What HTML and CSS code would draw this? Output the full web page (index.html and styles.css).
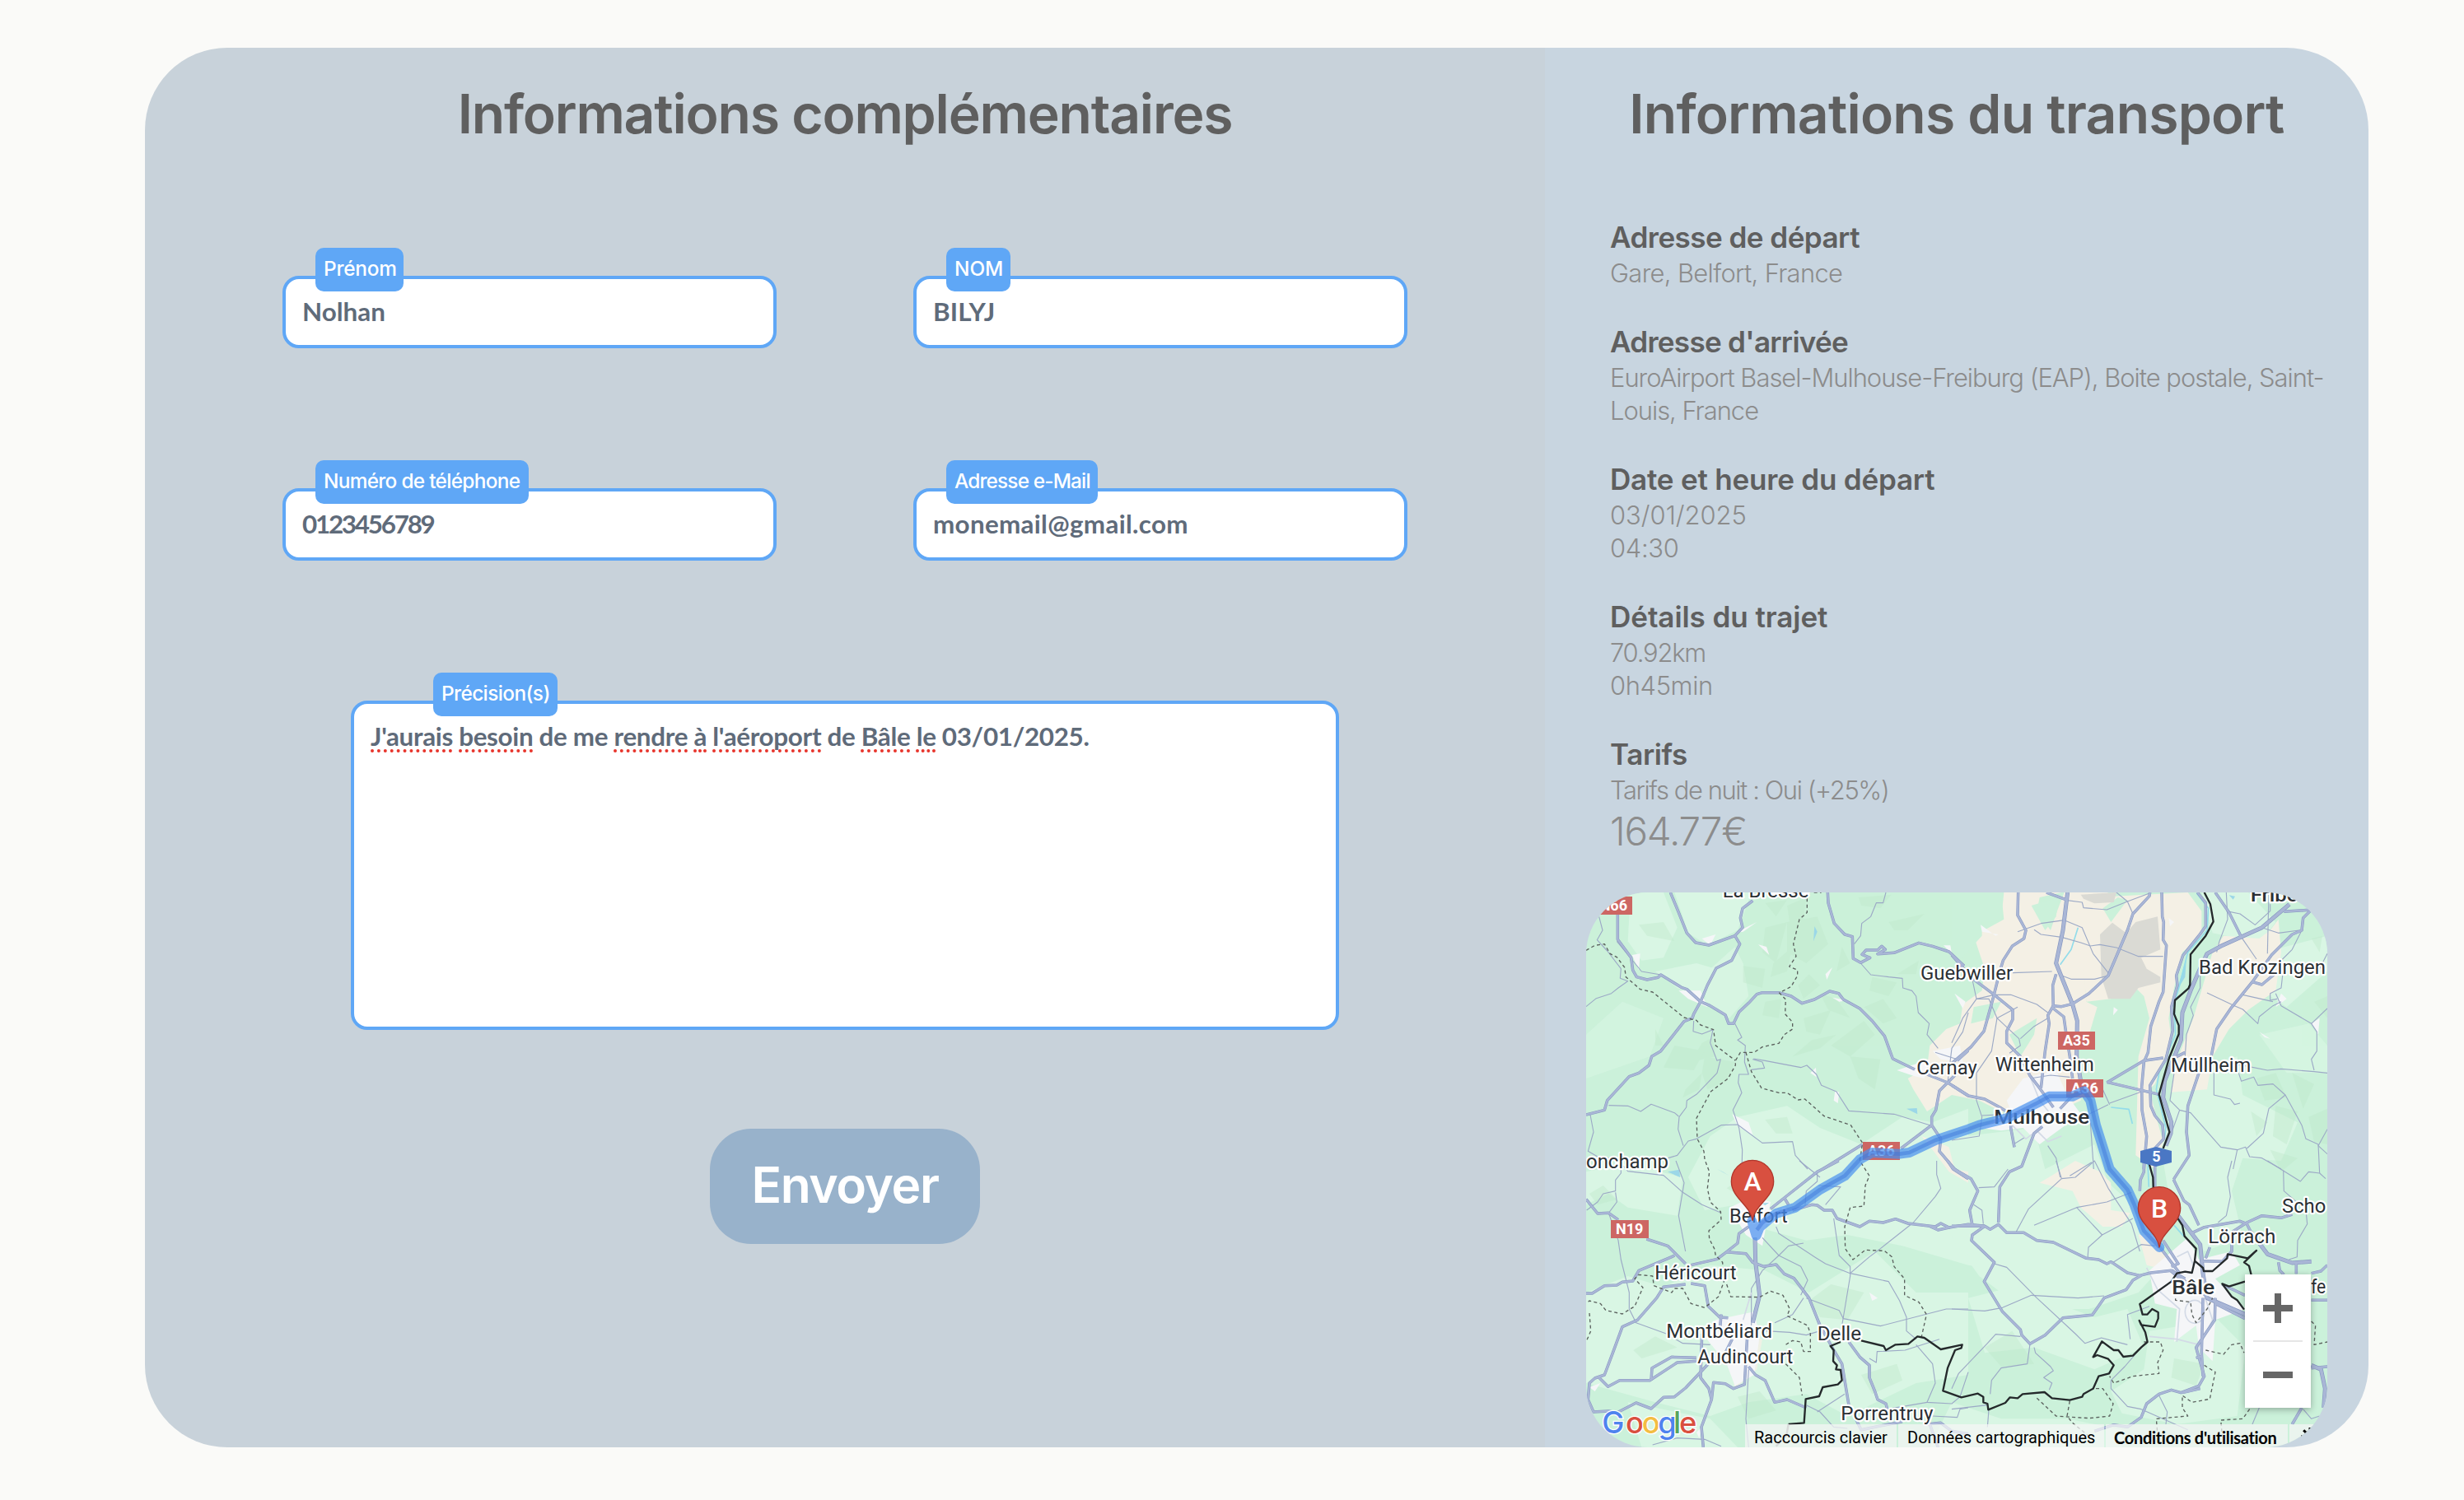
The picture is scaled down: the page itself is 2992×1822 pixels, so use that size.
FILE: index.html
```html
<!DOCTYPE html>
<html lang="fr">
<head>
<meta charset="utf-8">
<title>Réservation de transport</title>
<link rel="stylesheet" href="styles.css">
</head>
<body>
<main class="card">
  <section class="form-panel">
    <h1 class="title title-form">Informations complémentaires</h1>
    <form class="form">
      <div class="fields">
        <div class="field"><label class="tag tag-first" for="prenom">Prénom</label><input class="input input-first" id="prenom" value="Nolhan"></div>
        <div class="field"><label class="tag tag-last" for="nom">NOM</label><input class="input input-last" id="nom" value="BILYJ"></div>
        <div class="field"><label class="tag tag-tel" for="tel">Numéro de téléphone</label><input class="input input-tel" id="tel" value="0123456789"></div>
        <div class="field"><label class="tag tag-mail" for="mail">Adresse e-Mail</label><input class="input input-mail" id="mail" value="monemail@gmail.com"></div>
      </div>
      <div class="notes-field">
        <span class="tag tag-notes">Précision(s)</span>
        <div class="notes" contenteditable="true" spellcheck="false"><u>J'aurais</u> <u>besoin</u> de me <u>rendre</u> <u>à</u> <u>l'aéroport</u> de <u>Bâle</u> <u>le</u> 03/01/2025.</div>
      </div>
      <button class="submit" type="button">Envoyer</button>
    </form>
  </section>

  <section class="trip-panel">
    <h1 class="title title-trip">Informations du transport</h1>
    <div class="info">
      <div class="block"><h2 class="h-from">Adresse de départ</h2><p class="p-from">Gare, Belfort, France</p></div>
      <div class="block"><h2 class="h-to">Adresse d'arrivée</h2><p class="p-to">EuroAirport Basel-Mulhouse-Freiburg (EAP), Boite postale, Saint-<br>Louis, France</p></div>
      <div class="block"><h2 class="h-date">Date et heure du départ</h2><p class="p-date">03/01/2025</p><p class="p-time">04:30</p></div>
      <div class="block"><h2 class="h-ride">Détails du trajet</h2><p class="p-km">70.92km</p><p class="p-min">0h45min</p></div>
      <div class="block"><h2 class="h-price">Tarifs</h2><p class="p-night">Tarifs de nuit : Oui (+25%)</p><p class="price">164.77€</p></div>
    </div>

    <div class="map">
      <svg class="map-canvas" viewBox="48 42 2700 2022">
        <!-- ground cover -->
        <rect x="48" y="42" width="2700" height="2022" fill="#cbf1da"/>
        <g fill="#d9f6e4">
          <path d="M370,42 L650,42 600,180 490,235 420,190Z"/>
          <path d="M210,42 L330,42 380,170 330,280 250,290 200,220Z"/>
          <path d="M300,330 L450,300 520,320 470,430 380,390Z"/>
          <path d="M490,330 L590,240 620,300 640,420 570,500 480,440Z" opacity=".8"/>
          <path d="M48,560 L180,440 330,500 280,640 48,720Z" opacity=".55"/>
          <path d="M600,860 L780,820 900,900 1050,960 1200,860 1310,880 1440,830 1440,1400 1200,1330 1000,1290 850,1310 700,1270 600,1180 480,1200 420,1080 500,930Z"/>
          <path d="M48,1060 L200,1030 400,1080 380,1220 200,1190 130,1140 48,1180Z"/>
          <path d="M48,1500 L200,1440 330,1480 500,1400 700,1420 860,1500 1100,1350 1250,1500 1440,1500 1440,1800 1250,1830 1000,1950 850,1870 640,1900 500,1950 300,1900 48,1830Z"/>
          <path d="M1430,930 L1680,900 1720,1050 1900,960 1950,1100 2060,1200 2150,1400 2060,1500 1880,1560 1640,1560 1480,1440 1380,1300Z"/>
          <path d="M2200,700 L2420,640 2440,780 2640,880 2580,1020 2440,1010 2400,1130 2440,1300 2300,1350 2180,1200 2140,960Z"/>
          <path d="M2290,42 L2460,42 2560,150 2480,260 2380,200 2330,190Z"/>
          <path d="M2480,270 L2748,200 2748,330 2600,460 2540,420Z"/>
          <path d="M1440,1520 L1600,1480 1900,1590 2020,1560 2080,1700 1900,1780 1680,1700 1500,1720Z"/>
          <path d="M2100,1640 L2350,1600 2450,1700 2420,1950 2200,1980 2000,1940 1960,1860 2080,1780Z"/>
          <path d="M1380,1900 L1560,1960 1800,1960 2000,2000 2000,2064 1300,2064Z"/>
          <path d="M1420,1080 L1600,1050 1620,1200 1560,1420 1440,1400Z"/>
          <path d="M2500,560 L2680,520 2748,600 2748,700 2600,700Z" opacity=".7"/>
          <path d="M200,1900 L500,1960 600,2064 250,2064Z"/>
        </g>
        <!-- relief facets -->
        <g fill="#bfe8cb" opacity=".42">
          <path d="M780,90 L850,60 840,140 800,220Z"/><path d="M700,170 L780,150 740,300 690,260Z"/><path d="M730,300 L800,240 780,330 720,350Z"/>
          <path d="M780,150 L890,130 930,230 850,300 780,260Z"/><path d="M620,310 L700,320 690,390 620,370Z"/><path d="M820,380 L860,340 900,380 840,430Z"/>
          <path d="M700,440 L760,430 750,500 690,490Z"/><path d="M840,500 L940,470 900,560 850,550Z"/><path d="M870,580 L960,560 900,610 800,640Z"/>
          <path d="M940,600 L1060,510 1100,560 1010,640Z"/><path d="M1090,350 L1180,370 1150,420 1080,400Z"/><path d="M470,590 L510,570 520,640 430,660Z"/>
          <path d="M370,600 L480,620 440,690 330,680Z"/><path d="M480,640 L590,660 560,730 490,760 470,700Z"/><path d="M410,760 L470,700 460,760 400,790Z"/>
          <path d="M300,540 L330,600 300,600Z"/><path d="M700,870 L780,860 800,920 740,920Z"/><path d="M1010,640 L1120,650 1100,760 1040,720Z"/>
          <path d="M240,160 L330,150 370,220 270,200Z"/><path d="M1040,60 L1160,50 1120,100 1050,90Z"/><path d="M1150,150 L1280,120 1220,180 1170,180Z"/>
          <path d="M1180,340 L1260,290 1250,340Z"/><path d="M700,80 L780,70 740,130Z"/><path d="M900,410 L960,430 1010,500 930,470Z"/>
          <path d="M1060,460 L1130,430 1180,500 1130,520Z"/><path d="M980,240 L1010,300 960,330Z"/><path d="M2490,720 L2560,700 2600,790 2520,800Z"/>
          <path d="M2560,820 L2640,840 2600,960 2550,930Z"/><path d="M2470,840 L2530,880 2490,930Z"/><path d="M2620,700 L2700,740 2660,830Z"/>
          <path d="M2680,860 L2748,830 2748,960 2700,950Z"/><path d="M2540,980 L2640,1010 2580,1060Z"/><path d="M2690,210 L2730,200 2720,260Z"/>
          <path d="M2700,440 L2748,420 2748,500Z"/><path d="M60,1140 L110,1110 160,1160 90,1180Z"/><path d="M860,1530 L940,1470 1060,1500 1000,1600 900,1590Z"/>
          <path d="M220,1710 L300,1660 380,1700 250,1740Z"/><path d="M1050,1800 L1180,1760 1200,1820 1090,1870Z"/><path d="M1500,1700 L1600,1640 1680,1760 1560,1770Z"/>
          <path d="M560,1120 L620,1080 700,1120 630,1160Z"/><path d="M2190,1740 L2300,1760 2270,1840 2180,1810Z"/><path d="M600,1880 L680,1860 740,1930 640,1960Z"/>
        </g>
        <!-- lowland, heath and settlements -->
        <g fill="#f4f0e5">
          <path d="M1560,42 L1780,42 1700,60 1690,110 1740,180 1760,120 1790,42 1950,42 1900,110 1900,200 1860,280 1870,440 1910,460 1880,560 1840,620 1850,720 1850,800 1700,870 1560,840 1480,800 1380,780 1290,840 1240,760 1220,720 1290,680 1300,600 1360,540 1410,520 1420,450 1490,400 1500,320 1460,200 1570,140Z"/>
          <path d="M1900,60 L2240,42 2290,110 2290,200 2220,260 2190,390 2170,500 2180,580 2120,740 2100,760 2130,880 2150,950 2120,1050 2050,1000 2060,640 2100,500 2080,420 2050,390 1960,430 1870,440 1850,200Z"/>
          <path d="M2330,260 L2370,200 2500,210 2540,180 2570,140 2580,260 2560,400 2460,470 2390,540 2330,640 2310,760 2180,770 2190,680 2260,500Z"/>
          <path d="M1700,1100 L1750,1070 1830,1020 1920,1060 1960,1100 1960,1200 2030,1210 2000,1260 1930,1260 1850,1190 1820,1130Z"/>
          <path d="M2060,1290 L2120,1290 2170,1380 2130,1410 2090,1400Z"/>
          <path d="M1270,930 L1370,970 1390,1050 1440,1060 1440,1100 1370,1060 1310,980Z"/>
          <path d="M575,1770 L640,1650 690,1670 670,1780 590,1850Z" opacity=".8"/>
        </g>
        <g fill="#cbf1da">
          <path d="M1670,90 L1770,60 1760,130 1720,180Z"/><path d="M1460,460 L1560,440 1530,500 1450,520Z"/><path d="M1590,560 L1690,500 1680,560 1630,640Z"/>
          <path d="M1380,42 L1570,42 1560,145 1490,150 1490,200 1380,320Z"/><path d="M1930,100 L1985,60 2020,70 1960,150Z"/>
        </g>
        <g fill="#dadad4">
          <path d="M1850,50 L1980,42 1970,78 1900,82 1860,65Z"/>
          <path d="M1920,195 L1965,152 2015,190 2050,150 2130,130 2140,250 2070,280 2090,320 2140,350 2140,370 2060,390 2030,430 1950,430 1925,350Z"/>
        </g>
        <g fill="#f5f6f8">
          <path d="M1640,720 L1760,690 1800,780 1850,850 1740,930 1700,960 1640,900 1560,910 1480,900 1600,850 1580,800Z"/>
          <path d="M1180,690 L1300,650 1280,720 1240,710Z"/><path d="M1310,620 L1410,600 1420,660 1340,650Z"/>
          <path d="M2100,1420 L2240,1300 2280,1380 2400,1350 2430,1400 2340,1450 2450,1560 2340,1600 2330,1750 2280,1700 2270,1620 2190,1680 2200,1560 2120,1540Z"/>
          <path d="M520,1600 L660,1570 680,1660 660,1800 590,1840 560,1760 480,1660Z"/><path d="M570,1190 L660,1150 720,1170 690,1330 630,1290Z"/>
          <path d="M385,400 L465,400 490,460 420,430Z"/><path d="M470,210 L520,195 500,235Z"/><path d="M590,190 L670,150 620,185Z"/>
          <path d="M215,270 L245,265 240,325Z"/><path d="M675,232 L705,240 715,270Z"/><path d="M580,850 L640,880 655,925 600,895Z"/>
          <path d="M920,340 L945,315 925,360Z"/><path d="M945,425 L1000,435 970,440Z"/><path d="M1350,235 L1375,235 1380,265Z"/>
          <path d="M1485,160 L1540,200 1550,195 1490,185Z"/><path d="M1390,410 L1430,440 1420,465Z"/><path d="M2190,150 L2170,135 2175,165Z"/>
          <path d="M2560,460 L2580,410 2600,430Z"/><path d="M2690,520 L2720,500 2715,560Z"/><path d="M865,700 L885,680 887,715Z"/>
          <path d="M955,765 L970,770 965,810 950,800Z"/><path d="M450,2010 L468,1990 460,2030Z"/><path d="M1080,1500 L1110,1520 1090,1530Z"/>
          <path d="M1970,460 L1985,470 1968,490Z"/><path d="M2500,550 L2540,575 2520,570Z"/><path d="M60,1845 L100,1830 80,1860Z"/>
        </g>
        <g fill="#9bd7e8">
          <path d="M880,165 L890,185 876,220Z"/><path d="M1215,830 L1253,828 1255,850Z"/><path d="M345,1060 L388,1052 390,1080Z"/><path d="M525,1050 L570,1075 545,1060Z"/>
          <path d="M690,1175 L715,1172 700,1182Z"/><path d="M2390,52 L2412,56 2405,68Z"/><path d="M2200,400 L2235,280 2230,350Z"/>
        </g>
        <g class="water"><path d="M2272,45 L2315,100 2310,180 2240,260 2210,380 2190,450 2195,560 2135,700 2125,760 2160,900 2155,940"/><path d="M2094,1030 L2098,1115"/><path d="M1840,170 L1815,250 1775,305"/><path d="M1960,825 L2025,832 2038,885"/><path d="M2190,1255 L2225,1295"/></g>

        <!-- minor roads, north-west -->
        <g class="minor">
          <path d="M95,130 L108,180 88,215 125,255 175,320 172,355 200,365 165,390 140,410 85,428 48,458"/><path d="M160,220 L250,330 320,342"/>
          <path d="M440,510 L438,548 470,558 510,542 500,590 525,655 538,650 525,700 450,778 415,800 413,825 387,860 383,905 402,965"/>
          <path d="M130,818 L200,820 247,840 285,814 370,845 385,858"/><path d="M63,852 L75,915 55,985 90,1005 180,1015"/>
          <path d="M590,520 L615,570 600,580 628,600 625,660 640,705 605,705 602,735 615,772 583,835 605,900 617,980 615,1060"/>
          <path d="M330,1015 L380,1000 420,948 450,940 500,912 540,890 600,888 690,955 800,950 810,1000 855,1050"/>
          <path d="M655,650 L690,660 698,682 650,688"/><path d="M658,648 L700,655 830,680 852,672 887,705 905,745 960,768 1005,838 1170,850 1300,890"/>
          <path d="M1140,42 L1130,80 1105,80 1085,130 1052,155 1048,200 1025,230"/>
          <path d="M1048,300 L1085,342 1150,350 1200,355 1202,390 1235,400 1250,420 1258,480 1298,520 1290,560 1330,610"/>
          <path d="M1320,625 L1400,650"/><path d="M1440,480 L1420,550 1380,610 1365,735"/>
        </g>
        <!-- minor roads, north-east -->
        <g class="minor" transform="translate(1380 0)">
          <path d="M240,185 L325,155 410,143 475,170 515,265 570,335"/><path d="M300,178 L325,195 400,205 470,225 505,237 540,232 600,243 680,275 770,275"/>
          <path d="M415,70 L475,78 480,98 565,105 640,75 720,45"/><path d="M222,335 L365,330"/><path d="M400,345 L435,358 520,358 570,345"/><path d="M600,42 L640,75 660,120"/>
          <path d="M75,360 L90,430 155,415 215,415 310,450 350,480"/><path d="M90,430 L40,500 0,590"/><path d="M90,430 L135,430 165,500 240,460"/>
          <path d="M165,500 L245,575 250,600 210,628"/><path d="M350,500 L300,530 250,575"/><path d="M165,500 L145,620 90,700 90,800 110,860 100,930 0,945"/>
          <path d="M285,720 L360,708 430,715"/><path d="M110,855 L200,850"/><path d="M225,960 L265,935"/>
          <path d="M1000,42 L1005,140 975,220 965,260"/><path d="M1000,110 L1050,120 1105,160 1160,110 1160,85"/><path d="M1055,205 L1110,285"/><path d="M1155,42 L1150,265"/>
          <path d="M1130,170 L1190,190 1265,180"/><path d="M1275,180 L1240,250 1190,300"/><path d="M1368,265 L1335,330"/><path d="M1205,345 L1200,390 1160,410 1160,435 1185,430"/>
          <path d="M930,408 L1030,455 1060,468 1115,520 1120,495 1170,455 1200,440"/><path d="M1180,410 L1200,455 1310,520 1330,550 1330,620 1310,650 1320,690"/>
          <path d="M1060,415 L1170,440"/><path d="M1368,465 L1310,520"/><path d="M905,340 L905,390 870,460 880,490 855,560 850,640"/>
          <path d="M955,700 L955,780 1015,795 1030,815 1050,810"/><path d="M1000,690 L1050,670 1150,690 1200,685 1320,695 1368,700"/>
          <path d="M1045,700 L1055,730 1100,715 1115,745 1170,740 1215,780 1275,890 1290,940 1335,960 1340,1065"/>
          <path d="M810,700 L795,800 830,835 870,845 980,970 1040,980 1070,970 1085,1005 1130,1010 1200,1050"/><path d="M1040,980 L1025,1050"/><path d="M1075,975 L1135,920 1155,830 1215,780"/>
          <path d="M1368,905 L1335,965 1368,995"/><path d="M830,835 L800,920"/><path d="M575,810 L700,765"/><path d="M550,760 L575,815"/><path d="M570,815 L500,850"/>
          <path d="M350,965 L380,1010 395,1080"/><path d="M505,880 L517,1050"/><path d="M510,1025 L430,1075"/>
        </g>
        <!-- minor roads, south-west -->
        <g class="minor" transform="translate(0 1020)">
          <path d="M180,15 L200,38 330,53 400,115 470,160 540,190"/><path d="M375,0 L405,80 385,200 410,330"/>
          <path d="M175,15 L175,45 155,70 155,110 110,120 90,150 50,180"/><path d="M155,115 L160,150 130,190 165,290 175,360 205,480 205,540 230,590 340,630 400,665 500,670"/>
          <path d="M690,280 L750,345 830,385 855,435 830,490"/><path d="M740,240 L750,265 880,350 920,375 1010,410 1150,440 1190,510 1215,570 1215,620 1250,650"/>
          <path d="M950,210 L970,345 1010,385 1010,420 980,600"/><path d="M1010,410 L1080,350 1120,320 1240,225 1320,130 1340,100 1325,50 1325,0"/>
          <path d="M850,500 L970,545 985,575 1120,602 1360,540 1440,540"/><path d="M700,620 L790,625 850,635 900,620"/><path d="M735,590 L800,560 840,500"/>
          <path d="M690,400 L650,465 650,600"/><path d="M825,0 L900,60"/><path d="M640,760 L630,940 640,1044"/><path d="M890,40 L890,75 850,110 845,170"/><path d="M895,90 L975,95 920,160"/>
          <path d="M890,915 L990,850"/><path d="M850,890 L900,915 950,970 1000,975"/><path d="M290,1035 L380,1010 480,1015 540,1040"/><path d="M1080,720 L1105,735 1108,695 1210,690 1335,650"/>
          <path d="M1250,670 L1310,740 1320,810 1290,880 1380,885 1410,860 1440,770"/><path d="M1145,905 L1290,880"/><path d="M1310,930 L1400,935 1410,905 1440,900"/><path d="M840,300 L785,310 750,345"/><path d="M750,345 L690,400"/>
        </g>
        <!-- minor roads, south-east -->
        <g class="minor" transform="translate(1380 1020)">
          <path d="M380,0 L400,65 280,175 235,258"/><path d="M400,65 L450,60 520,0 570,100 655,230 685,330"/><path d="M655,115 L565,150 455,170 300,235"/><path d="M455,170 L548,270 660,210"/>
          <path d="M548,270 L498,315 495,355"/><path d="M98,98 L155,95 205,30"/><path d="M80,160 L110,180 115,230"/><path d="M155,375 L200,388 310,500 450,630 485,665 545,645 640,670"/>
          <path d="M0,540 L120,547 185,535 290,490 460,500 555,492"/><path d="M300,680 L305,700 360,750 370,765 335,790 365,810 355,835"/><path d="M285,667 L275,740 180,755 145,800 140,850"/>
          <path d="M250,640 L160,632 130,665 25,775 0,830"/><path d="M135,907 L130,970"/><path d="M0,905 L130,890"/><path d="M1020,0 L1005,60 1015,130 1000,200 970,225"/>
          <path d="M1150,0 L1270,75 1300,40 1340,45 1362,65"/><path d="M1208,35 L1210,110 1290,180 1295,230 1260,290 1258,350 1228,360"/><path d="M720,530 L640,560 650,650"/>
          <path d="M690,680 L630,750 580,800 580,830 640,895 690,905 780,945 860,980"/><path d="M755,855 L785,915 780,960"/><path d="M1120,900 L1095,960"/><path d="M1280,905 L1310,940 1340,930"/><path d="M580,375 L690,305 740,310"/>
        </g>
        <g class="urban">
          <path d="M1600,890 L1650,940 1690,910 1730,950 1780,930"/><path d="M1660,700 L1700,800 1740,850"/><path d="M2200,1370 L2240,1350 2260,1400"/><ellipse cx="2265" cy="1570" rx="35" ry="42"/>
          <path d="M2090,1410 L2130,1490 2210,1560 2200,1680"/><path d="M2100,1660 L2200,1670 2280,1690"/><path d="M650,1500 L620,1600"/><path d="M2300,1510 L2330,1600 2270,1720"/>
        </g>

        <!-- main roads: casing then fill -->
        <defs>
          <g id="roads">
            <path d="M355,42 L383,110 415,190 447,225 495,234 590,200 618,170 610,135 618,100 655,72"/><path d="M590,200 L608,230 578,290 522,318 490,380 465,440"/>
            <path d="M163,123 L163,213 212,280 218,325 232,350 270,360 310,352 320,342 395,388 415,395 465,440 500,455 555,488 567,520 585,520 605,478 640,445 670,413 690,407 750,407 795,420 835,446 880,432 935,402 968,410 985,432 1045,465 1090,510 1135,565 1165,648 1245,687"/>
            <path d="M465,440 L440,485 435,500 405,512 320,620 287,640 277,672 240,700 205,713 125,800 115,835 48,852"/>
            <path d="M928,42 L930,80 952,155 990,195 1018,203 1021,283 1048,298 1082,280 1053,268 1068,252 1110,252 1125,238 1138,250 1110,266 1170,262 1260,226 1310,238 1370,258 1425,310"/>
            <path d="M1440,618 L1400,655 M1400,700 L1335,765 1322,835 1307,860 1307,890 1340,940 1335,985 1390,1050 1440,1085"/><path d="M1290,705 L1365,735 1440,782"/><path d="M1307,890 L1195,975"/><path d="M1055,960 L910,1050"/>
            <g transform="translate(1380 0)">
              <path d="M242,42 L240,125 270,180 263,210 220,238 187,290 175,330 150,430 117,548 70,605 0,665"/><path d="M0,270 L75,355 155,415 222,470 222,505 200,548 200,590 250,640 285,710 320,755 370,825"/>
              <path d="M345,42 L415,68"/><path d="M722,42 L720,55 660,120 640,180 570,345 500,410 440,448 400,458 370,455 350,490 355,520 340,620 325,755"/><path d="M380,340 L368,380 370,465 408,495 415,545 430,640 440,720"/>
              <path d="M765,42 L767,130 772,150 770,215 782,235 770,405 755,440 725,530 715,625 700,660 692,750 693,835 710,930 700,1050"/>
              <path d="M895,42 L925,80 925,165 900,200 842,272 818,345 822,380 800,460 805,545 780,650 722,745 725,820 740,855 768,890 772,940 735,980"/>
              <path d="M960,42 L1010,115 1055,205"/><path d="M1310,105 L1210,112"/><path d="M1310,105 L1280,135 1275,180 1240,195 1165,270 1095,368 1020,460 965,540 945,640 900,700 860,820 855,915 865,1000 808,1088"/>
              <path d="M1095,368 L1130,378 1175,340"/><path d="M565,733 L755,778"/><path d="M565,735 L700,655 770,645"/><path d="M0,745 L60,783 120,795 175,825 215,850 215,900 228,970"/>
              <path d="M330,895 L300,920 255,1040 210,1060 175,1115 170,1245"/><path d="M470,750 L395,830"/><path d="M800,650 L850,625"/>
            </g>
            <g transform="translate(0 1020)">
              <path d="M48,140 L90,192 130,190 165,215"/><path d="M268,285 L345,310 410,375"/><path d="M370,345 L360,350 240,400 218,438 180,442 160,453 115,455 70,483 48,483"/>
              <path d="M430,380 L525,358 560,332 630,338 655,370 695,385 740,378 770,412 805,428 860,500 900,600 950,690 980,740 1005,890"/><path d="M560,332 L600,300 605,265 640,240"/>
              <path d="M968,0 L890,40 770,135 720,175"/><path d="M770,135 L785,160"/><path d="M800,180 L870,160 890,162 915,180 945,180 962,210 1045,240 1080,220 1130,225 1175,212 1220,228 1320,240 1340,228 1370,243 1330,252 1300,238"/><path d="M1370,243 L1440,232 1500,238"/>
              <path d="M430,447 L480,455 493,530 535,570 565,572"/><path d="M410,450 L330,460 305,500 235,580 180,605 145,700 115,780 80,792 60,810 55,870 75,915 130,912 160,918 230,882 285,903 330,862 370,860 410,828 495,738"/>
              <path d="M95,790 L128,823 170,800 280,800 380,735 450,730"/><path d="M285,800 L288,755 360,715 450,718"/><path d="M470,630 L465,790 495,830 505,870 468,970 475,1044"/><path d="M505,870 L512,808 555,812 585,830 625,815 635,640"/>
              <path d="M640,750 L665,780 700,800 735,880 780,870 850,900"/><path d="M1005,660 L1045,715 1080,745 1080,790 1100,840 1110,870 1140,885 1145,905"/><path d="M1030,940 L1050,980 1200,950"/><path d="M1290,960 L1340,955 1380,985 1440,995"/>
              <path d="M1300,960 L1330,1044"/><path d="M1365,0 L1385,30 1440,65"/><path d="M540,560 L535,620"/><path d="M580,650 L555,700"/>
            </g>
            <g transform="translate(1380 1020)">
              <path d="M0,25 L70,65 95,110 65,180 75,235"/><path d="M0,238 L120,238 140,250 170,232 200,262 262,262 310,290 370,297 490,355 535,360 565,375 580,368 640,408 685,418 725,408 800,400 850,430"/>
              <path d="M120,238 L75,270 72,290 155,370 118,440 185,550 250,615 255,635 285,667 340,635 405,572 512,562 555,500 635,470 660,435 690,418"/>
              <path d="M755,310 L830,410"/><path d="M770,290 L825,375 800,385"/><path d="M700,0 L700,40 687,70 685,110"/><path d="M740,0 L740,95"/><path d="M808,68 L845,145 865,160 900,235"/>
              <path d="M870,265 L920,242 1050,220 1075,230 1090,260"/><path d="M1020,260 L1075,225 1130,200 1200,208 1240,195"/><path d="M915,365 L985,367 1020,330 1020,290"/><path d="M940,315 L925,355"/>
              <path d="M1190,370 L1195,400 1210,415"/><path d="M1255,375 L1255,412"/><path d="M1310,410 L1345,402 1368,380"/><path d="M1310,508 L1368,508"/><path d="M985,450 L1068,490"/><path d="M960,520 L1068,575"/>
              <path d="M960,500 L958,580 890,680 920,785 900,820 835,845 800,835 755,850 710,885 690,935 640,970 590,962 520,985"/><path d="M915,500 L910,700 915,785"/><path d="M840,845 L905,830"/><path d="M890,718 L912,712"/>
              <path d="M1310,755 L1368,750"/><path d="M1275,900 L1240,960"/>
            </g>
          </g>
          <g id="motorways">
            <path d="M1802,42 L1785,180 1760,300 1820,450 1837,510 1835,640 1850,730"/>
            <path d="M2610,85 L2510,170 2360,238 2310,265 2280,330 2250,400 2220,480 2215,580 2155,730 2150,790 2180,880 2178,920 2160,965"/>
            <path d="M663,1300 L665,1390 680,1510 655,1610"/>
            <path d="M2205,1220 L2285,1325 2295,1430 2310,1520 2380,1550 2450,1580"/>
            <path d="M2470,1280 L2530,1360 2620,1392 2690,1387"/>
            <path d="M2690,1765 L2725,1780 2740,1850 2735,1920"/>
            <path d="M2180,1420 L2240,1470 2310,1510"/>
          </g>
        </defs>
        <use href="#roads" class="casing"/><use href="#motorways" class="casing wide"/>
        <use href="#roads" class="fill"/><use href="#motorways" class="fill wide"/>

        <!-- department and canton limits -->
        <g class="limits">
          <path d="M853,42 L853,115 825,140 803,230 813,275 788,312 818,325 818,345 795,385 752,408 775,432 773,485 800,515 800,540 770,560 750,592 690,605 660,625 610,625 592,655 592,672 565,720 502,768 450,865 453,940 477,985 480,1015 497,1060 490,1120 500,1170 538,1205 540,1235 495,1275 497,1305 515,1340 520,1365 545,1390 550,1460 530,1515 480,1555 430,1540 400,1485 370,1485 360,1500 295,1475 290,1440 240,1435 225,1450 255,1482 225,1550 180,1578 120,1565 100,1540 60,1530 48,1540"/>
          <path d="M48,253 L80,235 115,230 135,265 160,278 188,315 193,350 245,395 290,405 405,498 450,508 465,525 512,542 520,600 592,655"/>
          <path d="M630,625 L650,695 687,755 750,772 780,772 820,798 845,795 915,857 1012,890 1055,955 1045,1020 1080,1075 1065,1110 1060,1185 1010,1190 990,1260 992,1340 1020,1380 1065,1345 1135,1348 1162,1370 1170,1405 1208,1450 1208,1510 1260,1535 1288,1580 1270,1660"/>
          <path d="M560,1470 L575,1515 680,1517 720,1495 765,1510 790,1560 780,1585 855,1620 865,1650 865,1715 840,1715 830,1680 800,1675 775,1690"/><path d="M60,1575 L65,1640 48,1680"/><path d="M775,1760 L825,1810 835,1875"/><path d="M878,42 L905,42"/>
          <g transform="translate(1380 1020)">
            <path d="M815,480 L815,508 870,515 875,560 890,590 930,540 950,500"/><path d="M700,660 L760,660 770,690 750,735 755,775 660,785 590,810 575,785"/><path d="M310,865 L380,930 500,938 575,930 588,885 550,830 515,830"/>
            <path d="M430,875 L420,930 440,955 520,1020"/><path d="M1310,585 L1325,600 1320,670 1368,660"/><path d="M925,690 L990,705 1020,670 1050,665 1065,700"/><path d="M920,745 L960,770 940,868 875,880 840,855 840,900 860,930 745,940 750,1000"/><path d="M1085,905 L1060,940 980,945 985,1000"/>
          </g>
        </g>
        <!-- national borders -->
        <g class="border">
          <path d="M2300,42 L2322,85 2333,148 2305,200 2250,268 2248,378 2242,392 2193,435 2190,485 2207,527 2207,558 2172,645 2135,778 2173,915 2150,975 M2096,1020 L2113,1080 2115,1140 M2200,1225 L2220,1255 2228,1295 2270,1340 2265,1385 2255,1428 2230,1424 2200,1430 2180,1460 2065,1542 2075,1580 2092,1580 2110,1560 2132,1572 2132,1595 2120,1625 2070,1618 2063,1602 2085,1645 2093,1680 2070,1700 2040,1730 2005,1734 1987,1710 1970,1710 1927,1678 1895,1735 1910,1728 1950,1742 1970,1765 1953,1795 1915,1805 1895,1850 1860,1870 1855,1880 1810,1892 1745,1885 1718,1863 1638,1870 1620,1885 1592,1882 1575,1902 1513,1927 1510,1905 1495,1900 1495,1880 1475,1868 1415,1882 1348,1858 1365,1775 1392,1710 1415,1702 1418,1690 1340,1707 1280,1665 1255,1660 1222,1687 1175,1690 1140,1710 1132,1695 1050,1675"/>
          <path d="M975,1680 L938,1695 950,1710 948,1750 962,1765 958,1780 975,1782 980,1820 965,1835 910,1845 897,1878 848,1888 842,1975 785,1980"/>
          <path class="faded" d="M785,1980 L778,2020 740,2060"/>
          <path d="M2265,1385 L2295,1410 2298,1422 2330,1422 2383,1375 2385,1360 2458,1375 2490,1347 2445,1390 2463,1403 2472,1440"/>
          <path d="M2448,1460 L2390,1478 2365,1468 2400,1515 2420,1528 2445,1562"/>
        </g>

        <!-- place names -->
        <g class="place">
          <text x="545" y="61" textLength="314" lengthAdjust="spacingAndGlyphs">La Bresse</text><text x="1266" y="361" textLength="336" lengthAdjust="spacingAndGlyphs">Guebwiller</text><text x="2280" y="340" textLength="462" lengthAdjust="spacingAndGlyphs">Bad Krozingen</text>
          <text x="1252" y="704" textLength="220" lengthAdjust="spacingAndGlyphs">Cernay</text><text x="1538" y="692" textLength="360" lengthAdjust="spacingAndGlyphs">Wittenheim</text><text x="2178" y="695" textLength="292" lengthAdjust="spacingAndGlyphs">Müllheim</text>
          <text x="48" y="1048" textLength="300" lengthAdjust="spacingAndGlyphs">onchamp</text><text x="570" y="1246" textLength="212" lengthAdjust="spacingAndGlyphs">Belfort</text><text x="298" y="1453" textLength="298" lengthAdjust="spacingAndGlyphs">Héricourt</text>
          <text x="340" y="1664" textLength="386" lengthAdjust="spacingAndGlyphs">Montbéliard</text><text x="454" y="1757" textLength="348" lengthAdjust="spacingAndGlyphs">Audincourt</text><text x="890" y="1673" textLength="160" lengthAdjust="spacingAndGlyphs">Delle</text><text x="976" y="1966" textLength="336" lengthAdjust="spacingAndGlyphs">Porrentruy</text>
          <text x="2583" y="1208" textLength="160" lengthAdjust="spacingAndGlyphs">Scho</text><text x="2314" y="1321" textLength="246" lengthAdjust="spacingAndGlyphs">Lörrach</text><text x="2688" y="1502" textLength="55" lengthAdjust="spacingAndGlyphs">fe</text>
          <text class="city" x="2468" y="76" textLength="176" lengthAdjust="spacingAndGlyphs">Fribo</text><text class="city" x="1534" y="886" textLength="348" lengthAdjust="spacingAndGlyphs">Mulhouse</text><text class="city" x="2182" y="1506" textLength="156" lengthAdjust="spacingAndGlyphs">Bâle</text>
        </g>
        <!-- road shields -->
        <g class="shield">
          <rect x="80" y="57" width="136" height="66"/><text x="98" y="108">N66</text>
          <rect x="1767" y="549" width="135" height="66"/><text x="1785" y="600">A35</text>
          <rect x="1797" y="723" width="135" height="66"/><text x="1815" y="774">A36</text>
          <rect x="1056" y="951" width="135" height="66"/><text x="1074" y="1002">A36</text>
          <rect x="138" y="1236" width="138" height="66"/><text x="156" y="1287">N19</text>
          <path d="M2067,984 L2124,969 2181,984 2181,1026 2124,1041 2067,1026Z" fill="#4a77c4"/><text x="2110" y="1024">5</text>
        </g>

        <!-- itinerary -->
        <path class="route" d="M652,1240 L668,1292 680,1262 740,1212 810,1190 900,1125 990,1075 1045,1015 1090,990 1190,995 1225,990 1320,945 1440,905 1480,890 1580,865 1690,810 1735,785 1820,785 1862,766 1885,800 1905,890 1935,985 1955,1050 2020,1125 2045,1180 2080,1275 2137,1335"/>
        <path class="route-core" d="M670,1272 L690,1245 740,1212 810,1190 900,1125 990,1075 1045,1015 1090,990 1190,995 1225,990 1320,945 1440,905 1480,890 1580,865 1690,810 1735,785 1820,785 1862,766 1885,800 1905,890 1935,985 1955,1050 2020,1125 2045,1180 2080,1275 2137,1335"/>
        <g class="pin">
          <path d="M654,1237 C646,1180 577,1155 577,1095 A77,77 0 0 1 731,1095 C731,1155 662,1180 654,1237Z"/><text x="654" y="1129">A</text>
          <path d="M2136,1335 C2128,1278 2059,1252 2059,1192 A77,77 0 0 1 2213,1192 C2213,1252 2144,1278 2136,1335Z"/><text x="2136" y="1226">B</text>
        </g>

        <!-- provider logo -->
        <text class="logo" y="2013"><tspan x="106" fill="#4f83ee">G</tspan><tspan x="192" fill="#d9503f">o</tspan><tspan x="251" fill="#f3bd42">o</tspan><tspan x="310" fill="#4f83ee">g</tspan><tspan x="366" fill="#58a55c">l</tspan><tspan x="387" fill="#d9503f">e</tspan></text>
      </svg>

      <div class="zoom">
        <button class="zoom-btn" type="button" aria-label="Zoom avant"><svg viewBox="0 0 36 36"><path d="M14 0h8v14h14v8H22v14h-8V22H0v-8h14z"/></svg></button>
        <button class="zoom-btn" type="button" aria-label="Zoom arrière"><svg viewBox="0 0 36 36"><path d="M0 14h36v8H0z"/></svg></button>
      </div>
      <div class="credits">
        <span class="credit credit-keys">Raccourcis clavier</span><span class="credit credit-data">Données cartographiques</span><span class="credit credit-terms">Conditions d'utilisation</span>
        <span class="credit credit-gear"><svg viewBox="0 0 22 22"><circle cx="11" cy="11" r="6"/><path d="M11 0v5M11 17v5M0 11h5M17 11h5M3.2 3.2l3.6 3.6M15.2 15.2l3.6 3.6M18.8 3.2l-3.6 3.6M3.2 18.8l3.6-3.6"/></svg></span>
      </div>
    </div>
  </section>
</main>
</body>
</html>
```

FILE: styles.css
```css
* { box-sizing: border-box; }
body {
  margin: 0;
  padding: 58px 116px 64px 176px;
  height: 1822px;
  background: #fafaf8;
  font-family: Inter, "Liberation Sans", sans-serif;
  overflow: hidden;
}
.card {
  display: grid;
  grid-template-columns: 1700px 1000px;
  height: 1700px;
  border-radius: 100px;
  overflow: hidden;
}
.form-panel { background: #c8d2da; padding-top: 40px; }
.trip-panel { background: #c8d5e0; padding-top: 40px; }

.title {
  margin: 0;
  font-size: 66px;
  line-height: 80px;
  font-weight: 600;
  color: #5f5f5f;
  text-align: center;
  white-space: nowrap;
}
.title-form { letter-spacing: -1.2px; }
.title-trip { letter-spacing: -0.78px; }

/* form */
.form { display: flex; flex-direction: column; align-items: center; margin-top: 157px; }
.fields { display: grid; grid-template-columns: 600px 600px; gap: 170px 166px; }
.field { position: relative; height: 88px; }
.tag {
  position: absolute;
  left: 40px;
  top: -34px;
  height: 53px;
  padding: 0 10px;
  border-radius: 10px;
  background: #5fa7f6;
  color: #fff;
  font-size: 24.4px;
  line-height: 51px;
  font-weight: 500;
  white-space: nowrap;
}
.tag-first { width: 107px; letter-spacing: -0.23px; }
.tag-last { width: 78px; letter-spacing: -0.05px; }
.tag-tel { width: 259px; letter-spacing: -0.7px; }
.tag-mail { width: 184px; letter-spacing: -0.85px; }
.tag-notes { left: 100px; width: 151px; letter-spacing: -0.6px; }
.input {
  display: block;
  width: 100%;
  height: 88px;
  border: 4px solid #5fa7f6;
  border-radius: 20px;
  background: #fff;
  padding: 0 20px 3px;
  outline: none;
}
.input, .notes {
  font-family: Lato, sans-serif;
  font-size: 31.4px;
  line-height: 38px;
  font-weight: 700;
  color: #5f6b7a;
}
.input-last { letter-spacing: 0.1px; }
.input-tel { letter-spacing: -2.25px; }
.input-mail { letter-spacing: 0.3px; }
.notes-field { position: relative; width: 1200px; margin-top: 170px; }
.notes {
  height: 400px;
  border: 4px solid #5fa7f6;
  border-radius: 20px;
  background: #fff;
  padding: 20px 20px;
  letter-spacing: -0.33px;
}
.notes u {
  text-decoration: underline dotted #e8352c 4px;
  text-decoration-skip-ink: none;
  text-underline-offset: 4px;
}
.submit {
  width: 328px;
  height: 140px;
  margin-top: 120px;
  padding: 0 0 4px;
  border: 0;
  border-radius: 50px;
  background: #98b2cb;
  color: #fff;
  font-family: inherit;
  font-size: 60.5px;
  font-weight: 600;
  letter-spacing: -1.42px;
}

/* trip summary */
.info { margin: 87px 0 0 79px; display: flex; flex-direction: column; gap: 40px; white-space: nowrap; }
.block h2 { margin: 0; font-size: 35.1px; line-height: 47px; font-weight: 600; color: #5f5f5f; }
.block p { margin: 0; font-size: 30.9px; line-height: 40px; font-weight: 350; color: #8c8c8c; }
.block .price { font-size: 47.5px; line-height: 60px; letter-spacing: -1.2px; }
.block .h-from { letter-spacing: -0.55px; }
.block .h-to { letter-spacing: -0.73px; }
.block .h-date { letter-spacing: -0.23px; }
.block .h-ride { letter-spacing: -0.09px; }
.block .h-price { letter-spacing: -0.42px; }
.block .p-from { letter-spacing: -0.65px; }
.block .p-to { letter-spacing: -1px; }
.block .p-date { letter-spacing: 0; }
.block .p-time { letter-spacing: -0.3px; }
.block .p-km { letter-spacing: -1.2px; }
.block .p-min { letter-spacing: -0.35px; }
.block .p-night { letter-spacing: -1.4px; }

/* map */
.map {
  position: relative;
  width: 900px;
  height: 674px;
  margin: 44px auto 0;
  border-radius: 75px;
  overflow: hidden;
  font-family: Roboto, sans-serif;
}
.map-canvas { display: block; width: 900px; height: 674px; }
.map-canvas path, .map-canvas use { stroke-linejoin: round; }
.water { fill: none; stroke: #93dcea; stroke-width: 5; }
.minor { fill: none; stroke: #9ca9c6; stroke-width: 3.4; }
.urban { fill: none; stroke: #d3dae6; stroke-width: 5; }
.casing { fill: none; stroke: #8797c0; stroke-width: 10.5; }
.fill { fill: none; stroke: #a9b6d6; stroke-width: 7.5; }
.casing.wide { stroke-width: 15; }
.fill.wide { stroke-width: 11; }
.limits { fill: none; stroke: #5b615e; stroke-width: 4; stroke-dasharray: 12 10; }
.border { fill: none; stroke: #24292b; stroke-width: 7; }
.border .faded { stroke: #8d9390; }
.place {
  font-size: 71px;
  fill: #2b3034;
  stroke: #fff;
  stroke-width: 13;
  stroke-linejoin: round;
  paint-order: stroke;
}
.place .city { font-weight: 500; }
.shield { fill: #cd6663; font-size: 54px; font-weight: 700; }
.shield text { fill: #fff; }
.route { fill: none; stroke: #4790ef; stroke-opacity: .7; stroke-width: 36; stroke-linecap: round; }
.route-core { fill: none; stroke: #4077da; stroke-opacity: .5; stroke-width: 14; }
.pin path { fill: #d85040; stroke: #b1362b; stroke-width: 4; }
.pin text { fill: #fff; font-size: 96px; font-weight: 500; text-anchor: middle; }
.logo {
  font-family: Inter, sans-serif;
  font-size: 109px;
  font-weight: 500;
  stroke: #fff;
  stroke-width: 8;
  paint-order: stroke;
}
.zoom {
  position: absolute;
  left: 800px;
  top: 464px;
  width: 80px;
  height: 162px;
  background: #fff;
  box-shadow: 0 2px 8px rgba(0, 0, 0, .3);
  display: flex;
  flex-direction: column;
}
.zoom-btn { flex: 1; padding: 0; border: 0; background: none; display: grid; place-items: center; }
.zoom-btn svg { width: 36px; height: 36px; fill: #666; }
.zoom-btn + .zoom-btn { position: relative; }
.zoom-btn + .zoom-btn::before { content: ""; position: absolute; left: 10px; right: 10px; top: -1px; height: 2px; background: #e6e6e6; }
.credits { position: absolute; left: 193px; right: 0; bottom: 0; height: 28px; display: flex; gap: 2px; }
.credit { background: rgba(245, 245, 245, .72); color: #000; font-size: 20px; line-height: 32px; white-space: nowrap; padding-left: 11px; overflow: hidden; }
.credit-keys { width: 184px; }
.credit-data { width: 250px; }
.credit-terms { width: 221px; font-family: Lato, sans-serif; font-weight: 700; letter-spacing: -0.3px; padding-left: 10px; }
.credit-gear { flex: 1; padding: 4px 0 0 14px; }
.credit-gear svg { display: block; width: 22px; height: 22px; fill: none; stroke: #000; stroke-width: 3; }
```
